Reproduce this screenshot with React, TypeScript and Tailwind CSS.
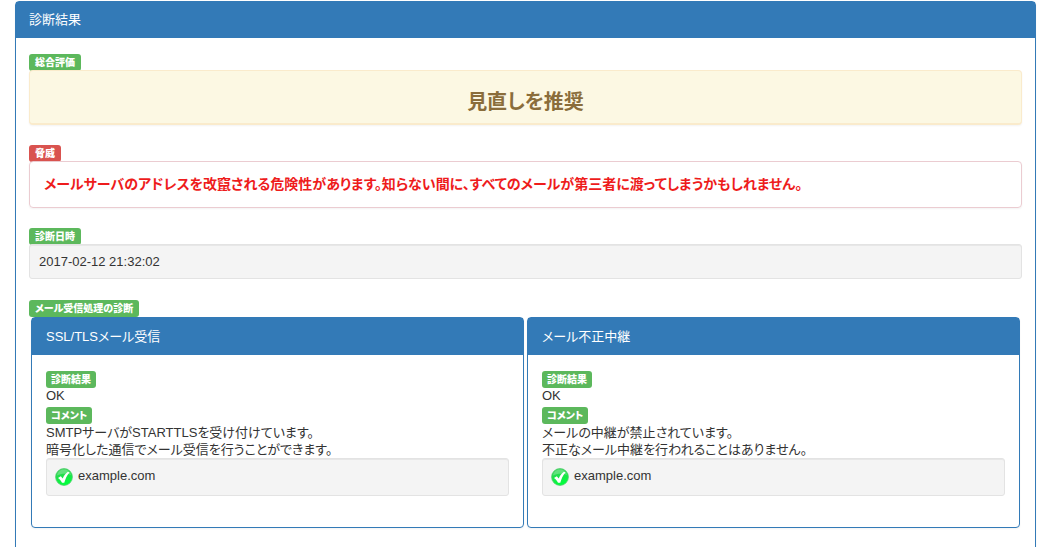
import React, { useId } from "react";
import clsx from "clsx";

interface Check {
  title: string;
  result: string;
  comment: string[];
  hosts: string[];
}

const checks: Check[] = [
  {
    title: "SSL/TLSメール受信",
    result: "OK",
    comment: ["SMTPサーバがSTARTTLSを受け付けています。", "暗号化した通信でメール受信を行うことができます。"],
    hosts: ["example.com"],
  },
  {
    title: "メール不正中継",
    result: "OK",
    comment: ["メールの中継が禁止されています。", "不正なメール中継を行われることはありません。"],
    hosts: ["example.com"],
  },
];

interface LabelProps {
  children: React.ReactNode;
  danger?: boolean;
  small?: boolean;
}

function Label({ children, danger, small }: LabelProps) {
  return (
    <span
      className={clsx(
        "block w-fit rounded-[3px] text-[10px] leading-[17px] font-black text-white",
        small ? "px-[5px]" : "px-1.5",
        danger ? "bg-[#d9534f]" : "bg-[#5cb85c]"
      )}
    >
      {children}
    </span>
  );
}

function OkIcon() {
  const id = useId();
  return (
    <svg width="18" height="18" viewBox="0 0 18 18" className="shrink-0" role="img" aria-label="OK">
      <defs>
        <linearGradient id={id} x1="0" y1="0" x2="0.3" y2="1">
          <stop offset="0" stopColor="#3fce5c" />
          <stop offset="0.5" stopColor="#1fe04a" />
          <stop offset="1" stopColor="#00ff3c" />
        </linearGradient>
      </defs>
      <circle cx="9" cy="9" r="8.4" fill={`url(#${id})`} stroke="#4fcf6c" strokeWidth="0.8" />
      <path d="M2 7.5C2.8 3.6 5.6 1.6 9 1.6s6.2 2 7 5.4C12.5 5.3 6.5 5 2 7.5z" fill="#fff" opacity="0.25" />
      <path d="M3 10l2.800-1.800 1.900 2.200c1.200-2.800 2.700-4.800 5.200-6.700l1.600.7c-2.700 3-4.100 6.300-5.200 10.300H7C6.200 12.900 4.900 11.300 3 10z" fill="#fff" />
    </svg>
  );
}

function CheckPanel({ check }: { check: Check }) {
  return (
    <section className="flex-1 min-w-0 rounded border border-[#337ab7] bg-white shadow-xs">
      <h2 className="bg-[#337ab7] px-3.5 py-2 text-white leading-[21px]">{check.title}</h2>
      <div className="px-3.5 pt-4 pb-[31px]">
        <Label small>診断結果</Label>
        <p className="leading-4 mb-[3px]">{check.result}</p>
        <Label small>コメント</Label>
        {check.comment.map((line) => (
          <p key={line} className="leading-[17px]">{line}</p>
        ))}
        <ul className="rounded-[3px] border border-[#e3e3e3] bg-[#f4f4f4] px-2 py-[9px] inset-shadow-2xs">
          {check.hosts.map((host) => (
            <li key={host} className="flex gap-[5px]">
              <OkIcon />
              <span className="leading-4">{host}</span>
            </li>
          ))}
        </ul>
      </div>
    </section>
  );
}

export default function App() {
  return (
    <div className="bg-white px-[15px] pt-px font-['Liberation_Sans','Noto_Sans_CJK_JP',sans-serif] text-[13px] text-[#333] [font-feature-settings:'palt']">
      <main className="rounded border border-[#337ab7] bg-white pb-8 shadow-xs">
        <h1 className="bg-[#337ab7] px-[13px] py-2 text-white leading-5">診断結果</h1>
        <div className="flex flex-col gap-5 px-[13px] pt-4">
          <section>
            <Label>総合評価</Label>
            <p className="-mt-px rounded border border-b-2 border-[#faebcc] bg-[#fcf8e3] pt-[17px] pb-[7px] text-center text-xl leading-7 font-bold text-[#8a6d3b] shadow-xs">
              見直しを推奨
            </p>
          </section>

          <section>
            <Label danger>脅威</Label>
            <p className="-mt-px rounded border border-[#ebccd1] px-3.5 pt-3 pb-[13px] text-sm leading-5 font-bold text-[#ee1c1c] shadow-xs">
              メールサーバのアドレスを改竄される危険性があります。知らない間に、すべてのメールが第三者に渡ってしまうかもしれません。
            </p>
          </section>

          <section>
            <Label>診断日時</Label>
            <p className="-mt-px rounded-[3px] border border-[#e3e3e3] bg-[#f4f4f4] px-[9px] pt-[9px] pb-2 leading-4 inset-shadow-2xs">
              2017-02-12 21:32:02
            </p>
          </section>

          <section className="mt-px">
            <Label>メール受信処理の診断</Label>
            <div className="flex gap-[3px] px-0.5">
              {checks.map((check) => (
                <CheckPanel key={check.title} check={check} />
              ))}
            </div>
          </section>
        </div>
      </main>
    </div>
  );
}
